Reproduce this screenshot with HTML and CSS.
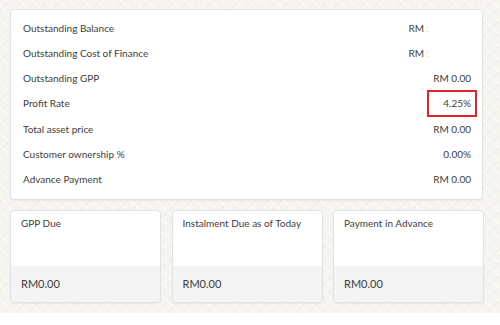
FILE: index.html
```html
<!DOCTYPE html>
<html>
<head>
<meta charset="utf-8">
<link rel="stylesheet" href="styles.css">
</head>
<body>
<div class="page">
  <div class="summary">
    <div class="row"><span class="label">Outstanding Balance</span><span class="value">RM<span class="faint">:</span></span></div>
    <div class="row"><span class="label">Outstanding Cost of Finance</span><span class="value">RM<span class="faint">:</span></span></div>
    <div class="row"><span class="label">Outstanding GPP</span><span class="value">RM 0.00</span></div>
    <div class="row"><span class="label">Profit Rate</span><span class="value highlight">4.25%</span></div>
    <div class="row"><span class="label">Total asset price</span><span class="value">RM 0.00</span></div>
    <div class="row"><span class="label">Customer ownership %</span><span class="value">0.00%</span></div>
    <div class="row"><span class="label">Advance Payment</span><span class="value">RM 0.00</span></div>
  </div>
  <div class="tiles">
    <div class="tile">
      <div class="tile-head">GPP Due</div>
      <div class="tile-foot">RM0.00</div>
    </div>
    <div class="tile">
      <div class="tile-head">Instalment Due as of Today</div>
      <div class="tile-foot">RM0.00</div>
    </div>
    <div class="tile">
      <div class="tile-head">Payment in Advance</div>
      <div class="tile-foot">RM0.00</div>
    </div>
  </div>
</div>
</body>
</html>
```

FILE: styles.css
```css
html, body {
  margin: 0;
  padding: 0;
  background: #ffffff;
  font-family: Lato, "Open Sans", sans-serif;
  color: #3d3d3d;
}

.page {
  width: 500px;
  height: 313px;
  box-sizing: border-box;
  padding: 9px 16px 9px 10px;
  background-color: #f6f4ee;
  background-image:
    repeating-linear-gradient(45deg, rgba(255,255,255,0.35) 0 2px, transparent 2px 9px),
    repeating-linear-gradient(-45deg, rgba(230,226,214,0.35) 0 1px, transparent 1px 9px);
}

.summary {
  background: #ffffff;
  border: 1px solid #e2e2e2;
  border-radius: 4px;
  box-shadow: 0 1px 2px rgba(0,0,0,0.06);
  padding: 5px 11px 7px 12px;
  width: 473px;
  box-sizing: border-box;
}

.row {
  display: flex;
  justify-content: space-between;
  align-items: center;
  height: 25.27px;
  font-size: 10px;
}

.value {
  text-align: right;
}

.faint {
  color: #c9c9c9;
  display: inline-block;
  width: 47px;
  padding-left: 2px;
  box-sizing: border-box;
  text-align: left;
}

.highlight {
  border: 2px solid #e3222b;
  padding: 5.5px 4px 5.5px 0;
  margin-right: -6px;
  width: 50px;
  box-sizing: border-box;
}

.tiles {
  display: grid;
  grid-template-columns: repeat(3, 151px);
  column-gap: 10.5px;
  margin-top: 10px;
}

.tile {
  background: #ffffff;
  border: 1px solid #e2e2e2;
  border-radius: 4px;
  box-shadow: 0 1px 2px rgba(0,0,0,0.06);
  overflow: hidden;
  display: flex;
  flex-direction: column;
  height: 93px;
  box-sizing: border-box;
}

.tile-head {
  height: 55px;
  padding: 6px 10px 0 10px;
  box-sizing: border-box;
  font-size: 10px;
  line-height: 13px;
}

.tile-foot {
  flex: 1;
  background: #f4f4f4;
  padding: 0 10px;
  display: flex;
  align-items: center;
  font-size: 11px;
}
```
